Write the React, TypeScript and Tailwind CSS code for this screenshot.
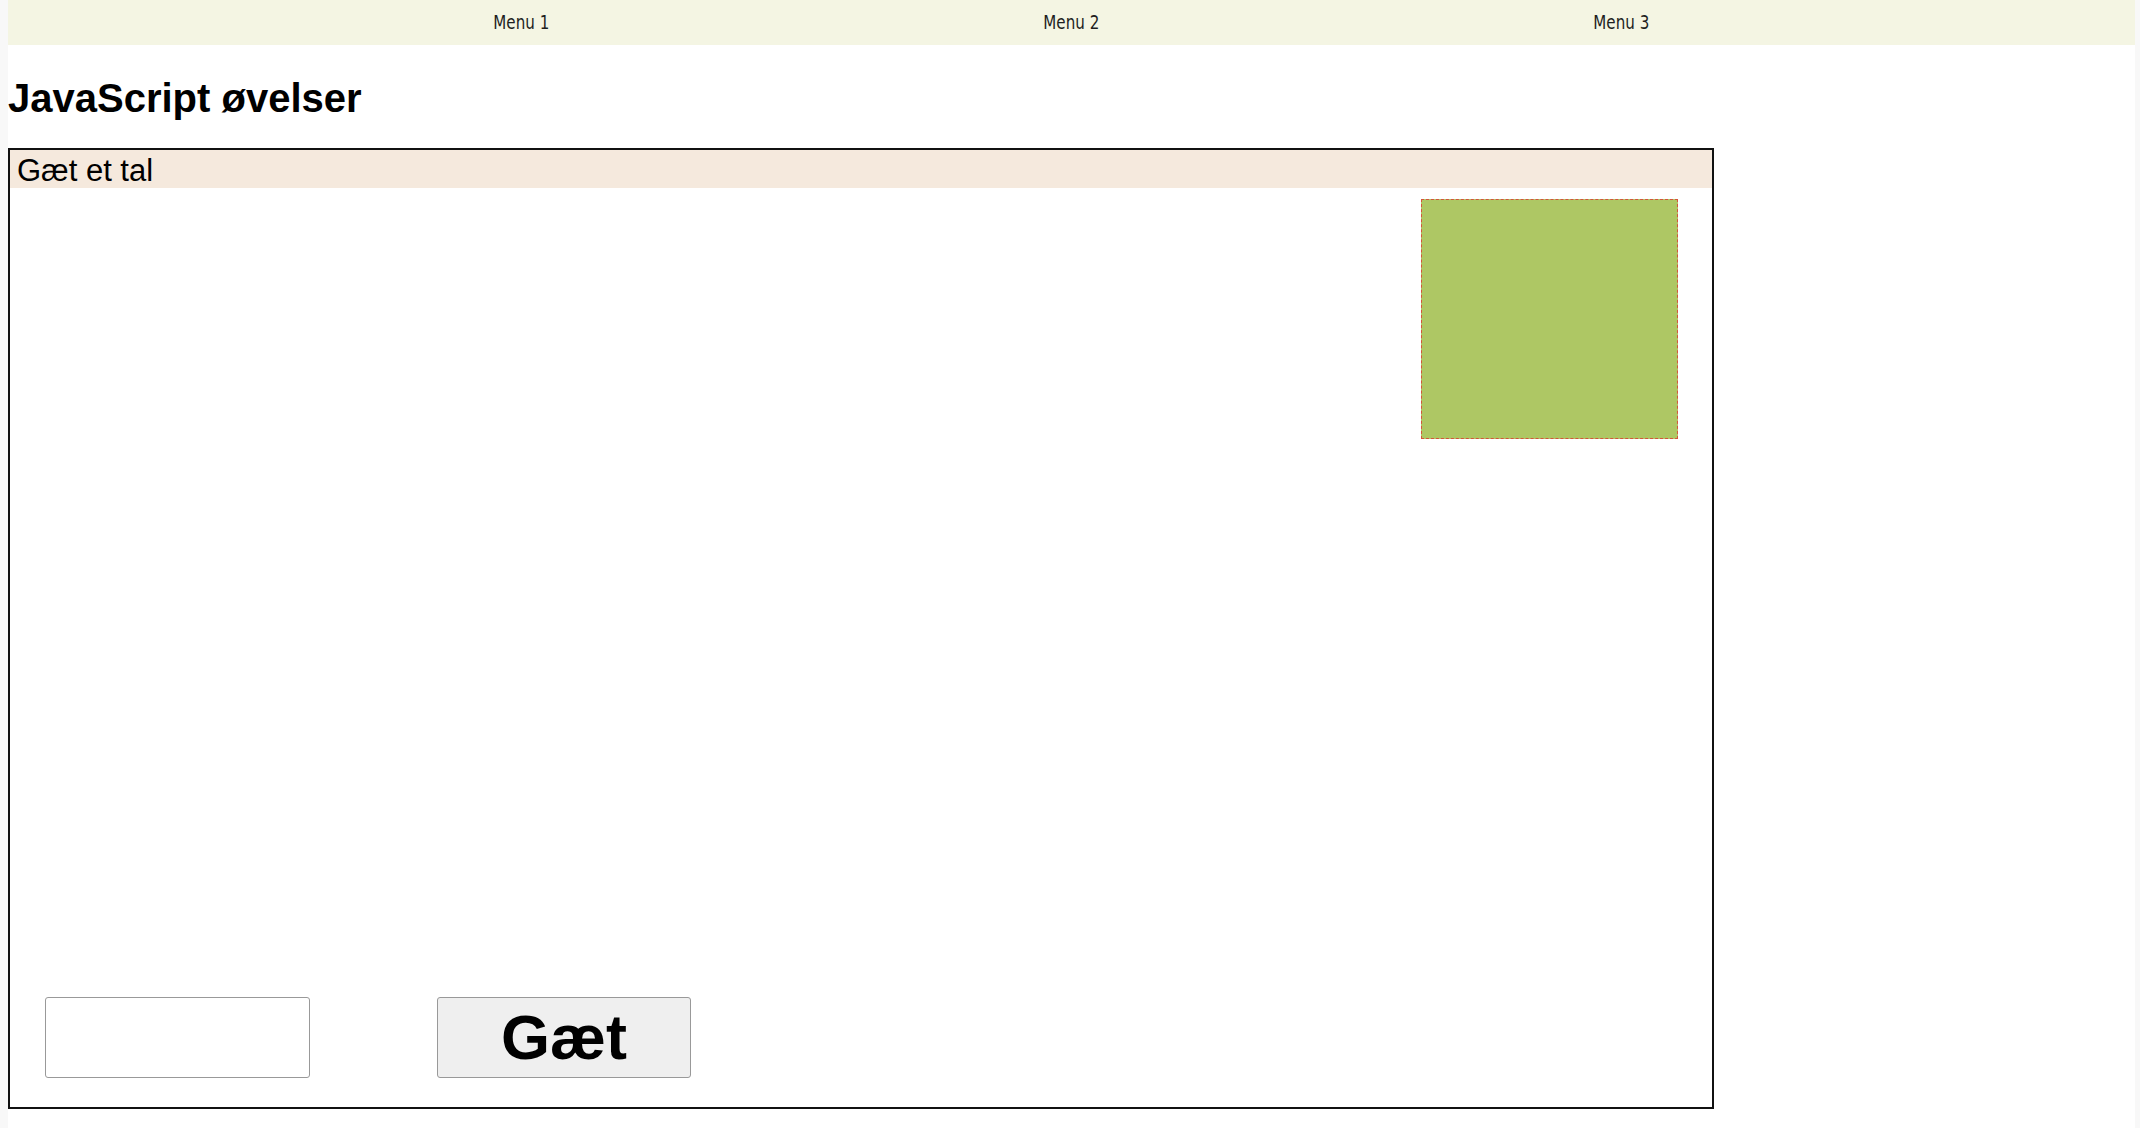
import { useState } from 'react';

const menuItems = ['Menu 1', 'Menu 2', 'Menu 3'];

export default function App() {
  const [guess, setGuess] = useState('');

  return (
    <div className="min-h-screen bg-[#f8f8f8] font-['Liberation_Sans',Arial,sans-serif] text-black">
      <div className="ml-[8px] mr-[5px] min-h-screen bg-white">
        <nav className="h-[45px] bg-[#f4f5e3] flex justify-center items-center">
          {menuItems.map((item) => (
            <div key={item} className="w-[550px] flex justify-center">
              <a
                href="#"
                className="inline-block scale-x-[0.84] text-[20px] leading-[23px] text-[#1e1e1e] font-['Liberation_Sans_Narrow','DejaVu_Sans_Condensed',sans-serif]"
              >
                {item}
              </a>
            </div>
          ))}
        </nav>

        <h1 className="mt-[33px] text-[40px] leading-[40px] font-bold">JavaScript øvelser</h1>

        <section className="mt-[30px] w-[1706px] h-[961px] border-2 border-[#111] flex flex-col">
          <h2 className="h-[38px] pt-[4px] pl-[7px] bg-[#f5e9dd] text-[31px] leading-[34px]">Gæt et tal</h2>

          <div className="flex-1 flex flex-col">
            <div className="self-end mt-[11px] mr-[34px] w-[257px] h-[240px] bg-[#aec764] border border-dashed border-[#d4553b]" />

            <div className="mt-auto pb-[29px] pl-[35px] flex gap-[127px]">
              <input
                type="text"
                value={guess}
                onChange={(e) => setGuess(e.target.value)}
                className="w-[265px] h-[81px] border border-[#999] rounded-[3px] bg-white px-2 text-[24px]"
              />
              <button className="w-[254px] h-[81px] border border-[#999] rounded-[3px] bg-[#efefef] text-[63px] leading-none font-bold">
                Gæt
              </button>
            </div>
          </div>
        </section>
      </div>
    </div>
  );
}
